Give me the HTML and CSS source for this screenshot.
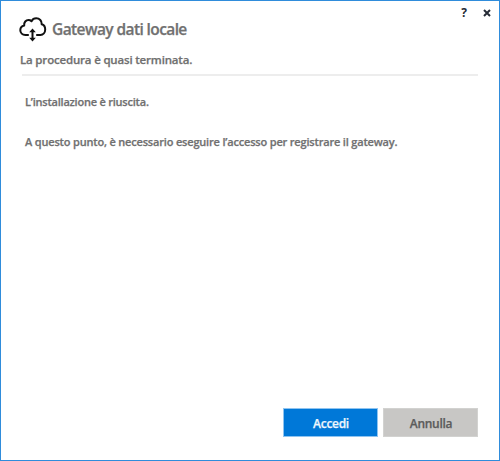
FILE: index.html
```html
<!DOCTYPE html>
<html lang="it">
<head>
<meta charset="utf-8">
<title>Gateway dati locale</title>
<link rel="stylesheet" href="styles.css">
</head>
<body>
<main class="dialog">
  <div class="controls"><span class="help">?</span>
    <svg class="close" viewBox="0 0 8 8"><path d="M1 1 7 7M7 1 1 7"/></svg>
  </div>
  <header class="header">
    <svg class="cloud" viewBox="0 0 28 26">
      <path class="line" d="M9.8 17.9H6.4C3.3 17.9 1.3 15.8 1.3 13.2C1.3 10.7 3 9 5.2 8.5C4.8 5.2 7 3 9.5 3C10.7 3 11.7 3.4 12.5 4.2C13.5 2.3 15.1 1.3 17.2 1.3C20.6 1.3 22.9 3.9 22.7 7.2C25 7.8 26.2 9.8 26.2 12.5C26.2 15.6 24.2 17.9 21.4 17.9H17.2"/>
      <path class="line" d="M13.5 14V22"/>
      <path class="head" d="M13.5 11.5 16.8 15.3H10.2ZM13.5 24.5 10.2 20.7H16.8Z"/>
    </svg>
    <h1 class="title">Gateway dati locale</h1>
  </header>
  <h2 class="subtitle">La procedura è quasi terminata.</h2>
  <hr class="divider">
  <section class="content">
    <p class="done">L’installazione è riuscita.</p>
    <p class="next">A questo punto, è necessario eseguire l’accesso per registrare il gateway.</p>
  </section>
  <footer class="actions">
    <button class="button primary">Accedi</button>
    <button class="button">Annulla</button>
  </footer>
</main>
</body>
</html>
```
FILE: styles.css
```css
* { box-sizing: border-box; }
body { margin: 0; font-family: "Open Sans", "Noto Sans", sans-serif; font-weight: 600; color: #707070; }
h1, h2, p { margin: 0; font-weight: 600; white-space: nowrap; }
.dialog { display: flex; flex-direction: column; width: 500px; height: 461px; background: #fff; border: 1px solid #2f8cdb; }
.controls { display: flex; justify-content: flex-end; align-items: center; height: 15px; padding: 8px 8px 0 0; gap: 16px; color: #262b36; font-size: 12px; line-height: 14px; font-weight: 700; }
.close { width: 8px; height: 8px; fill: none; stroke: #262b36; stroke-width: 2; }
.header { display: flex; align-items: center; height: 28px; padding-left: 18px; gap: 5px; }
.cloud { width: 28px; height: 26px; }
.line { fill: none; stroke: #111; stroke-width: 2; stroke-linejoin: round; }
.head { fill: #111; }
.title, .subtitle, .content, .button { -webkit-text-stroke: 0.25px currentColor; }
.title { padding-bottom: 2px; font-size: 15.5px; line-height: 24px; letter-spacing: -0.6px; }
.subtitle { height: 30px; padding: 8px 0 0 19px; font-size: 11.5px; line-height: 16px; letter-spacing: -0.18px; }
.divider { height: 2px; margin: 0 21px; border: 0; background: #ededed; }
.content { flex: 1; padding: 18px 24px 0; font-size: 11px; line-height: 16px; letter-spacing: -0.18px; }
.done { letter-spacing: -0.22px; }
.next { margin-top: 24px; }
.actions { display: flex; justify-content: flex-end; gap: 5px; padding: 0 21px 23px 0; }
.button { width: 95px; height: 29px; padding: 3px 0 0 1px; border: 1px solid #d2d2d0; background: #c8c7c5; color: #5c5c5c; font: 600 12px/16px "Open Sans", sans-serif; letter-spacing: -0.3px; }
.primary { border-color: #8fc4f0; background: #0078d8; color: #eef6fd; }
```
